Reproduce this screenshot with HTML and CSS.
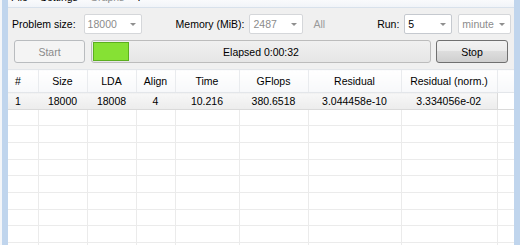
FILE: index.html
```html
<!DOCTYPE html>
<html lang="en">
<head>
    <meta charset="UTF-8">
    <title>Benchmark</title>
    <link rel="stylesheet" href="styles.css">
</head>
<body>
<div class="frame">
    <div class="menubar">
        <span class="menu-item">File</span>
        <span class="menu-item">Settings</span>
        <span class="menu-item disabled">Graphs</span>
        <span class="menu-item">?</span>
    </div>

    <div class="toolbar">
        <span class="label">Problem size:</span>
        <div class="combo combo-size disabled"><span>18000</span><i class="arrow"></i></div>
        <span class="label label-mem">Memory (MiB):</span>
        <div class="combo combo-mem disabled"><span>2487</span><i class="arrow"></i></div>
        <span class="label label-all">All</span>
        <span class="label label-run">Run:</span>
        <div class="combo combo-run"><span>5</span><i class="arrow"></i></div>
        <div class="combo combo-unit disabled"><span>minute</span><i class="arrow"></i></div>
    </div>

    <div class="controls">
        <button class="btn btn-start" disabled>Start</button>
        <div class="progress">
            <div class="progress-chunk"></div>
            <span class="progress-text">Elapsed 0:00:32</span>
        </div>
        <button class="btn btn-stop">Stop</button>
    </div>

    <table class="results">
        <colgroup>
            <col style="width:30px">
            <col style="width:49px">
            <col style="width:49px">
            <col style="width:39px">
            <col style="width:64px">
            <col style="width:69px">
            <col style="width:93px">
            <col style="width:96px">
            <col style="width:17px">
        </colgroup>
        <thead>
            <tr>
                <th class="num">#</th>
                <th>Size</th>
                <th>LDA</th>
                <th>Align</th>
                <th>Time</th>
                <th>GFlops</th>
                <th>Residual</th>
                <th>Residual (norm.)</th>
                <th></th>
            </tr>
        </thead>
        <tbody>
            <tr class="selected">
                <td class="num">1</td>
                <td>18000</td>
                <td>18008</td>
                <td>4</td>
                <td>10.216</td>
                <td>380.6518</td>
                <td>3.044458e-10</td>
                <td>3.334056e-02</td>
                <td class="spare"></td>
            </tr>
            <tr><td></td><td></td><td></td><td></td><td></td><td></td><td></td><td></td><td></td></tr>
            <tr><td></td><td></td><td></td><td></td><td></td><td></td><td></td><td></td><td></td></tr>
            <tr><td></td><td></td><td></td><td></td><td></td><td></td><td></td><td></td><td></td></tr>
            <tr><td></td><td></td><td></td><td></td><td></td><td></td><td></td><td></td><td></td></tr>
            <tr><td></td><td></td><td></td><td></td><td></td><td></td><td></td><td></td><td></td></tr>
            <tr><td></td><td></td><td></td><td></td><td></td><td></td><td></td><td></td><td></td></tr>
            <tr><td></td><td></td><td></td><td></td><td></td><td></td><td></td><td></td><td></td></tr>
            <tr><td></td><td></td><td></td><td></td><td></td><td></td><td></td><td></td><td></td></tr>
            <tr><td></td><td></td><td></td><td></td><td></td><td></td><td></td><td></td><td></td></tr>
        </tbody>
    </table>
</div>
</body>
</html>
```

FILE: styles.css
```css
body {
    margin: 0;
    width: 520px;
    height: 245px;
    overflow: hidden;
    background: #f4f6f9;
    font-family: "Liberation Sans", Arial, sans-serif;
    font-size: 10.5px;
    color: #000;
}

.frame {
    margin-left: 2px;
    height: 245px;
    border-left: 6px solid #c0d5ed;
    border-right: 6px solid #c0d5ed;
    background: #f0f0f0;
    overflow: hidden;
}

.menubar {
    display: flex;
    height: 7px;
    overflow: hidden;
    background: linear-gradient(#f9fafc, #f1f4f8);
    border-bottom: 1px solid #d8e1eb;
}

.menu-item {
    margin-top: -9px;
    line-height: 13px;
    padding: 0 6px;
}

.menu-item:first-child {
    margin-left: -3px;
}

.menu-item.disabled {
    color: #8d8d8d;
}

.toolbar {
    display: flex;
    align-items: center;
    height: 20px;
    margin-top: 6px;
    padding-left: 4px;
}

.label {
    white-space: nowrap;
}

.combo {
    display: flex;
    align-items: center;
    justify-content: space-between;
    box-sizing: border-box;
    height: 20px;
    padding: 0 5px 0 3px;
    background: #fff;
    border: 1px solid #c5c9cf;
    border-radius: 2px;
}

.combo.disabled {
    color: #8b8b8b;
    border-color: #d5d7da;
}

.arrow {
    width: 0;
    height: 0;
    border-left: 3px solid transparent;
    border-right: 3px solid transparent;
    border-top: 3px solid #8f8f8f;
}

.combo-size {
    width: 58px;
    margin-left: 8px;
}

.label-mem {
    margin-left: 34px;
}

.combo-mem {
    width: 54px;
    margin-left: 5px;
}

.label-all {
    margin-left: 10px;
    color: #9a9a9a;
}

.label-run {
    margin-left: 52px;
}

.combo-run {
    width: 48px;
    margin-left: 5px;
}

.combo-unit {
    width: 53px;
    margin-left: 6px;
}

.controls {
    display: flex;
    height: 23px;
    margin-top: 6px;
    padding: 0 6px;
    gap: 6px;
}

.btn {
    box-sizing: border-box;
    height: 23px;
    font: inherit;
    border-radius: 3px;
    padding: 0;
}

.btn-start {
    width: 71px;
    color: #8a8a8a;
    background: #f4f4f4;
    border: 1px solid #b9bcbf;
}

.btn-stop {
    width: 72px;
    margin-left: -1px;
    color: #000;
    background: linear-gradient(#f2f2f2 0%, #ebebeb 45%, #dddddd 50%, #cfcfcf 100%);
    border: 1px solid #707070;
}

.progress {
    position: relative;
    flex: 1;
    display: flex;
    align-items: center;
    box-sizing: border-box;
    border: 1px solid #bcbcbc;
    border-radius: 3px;
    background: linear-gradient(#f0f0f0, #e6e6e6);
    padding: 1px;
}

.progress-chunk {
    width: 36px;
    height: 19px;
    box-sizing: border-box;
    background: #86e134;
    border: 1px solid #5caf1f;
}

.progress-text {
    position: absolute;
    left: 0;
    right: 0;
    text-align: center;
}

.results {
    margin-top: 6px;
    width: 506px;
    table-layout: fixed;
    border-collapse: collapse;
    background: #fff;
}

.results th {
    height: 22px;
    padding: 0;
    font-weight: normal;
    background: linear-gradient(#ffffff, #f7f8fa);
    border-top: 1px solid #e3e6ea;
    border-left: 1px solid #e9ebee;
    border-bottom: 1px solid #e3e6ea;
}

.results th:first-child,
.results td:first-child {
    border-left: none;
}

.results td {
    height: 16.67px;
    padding: 0;
    text-align: center;
    box-sizing: border-box;
    border-left: 1px solid #ebebeb;
    border-bottom: 1px solid #ebebeb;
}

.results .num {
    text-align: left;
    padding-left: 7px;
}

.results tr.selected td {
    background: linear-gradient(#f7f7f7, #ececec);
    border-bottom: 1px solid #dadada;
    border-top: 1px solid #dadada;
    border-left: none;
}

.results tr.selected td.spare {
    background: #fff;
    border-left: 1px solid #dadada;
    border-top: none;
}
```
